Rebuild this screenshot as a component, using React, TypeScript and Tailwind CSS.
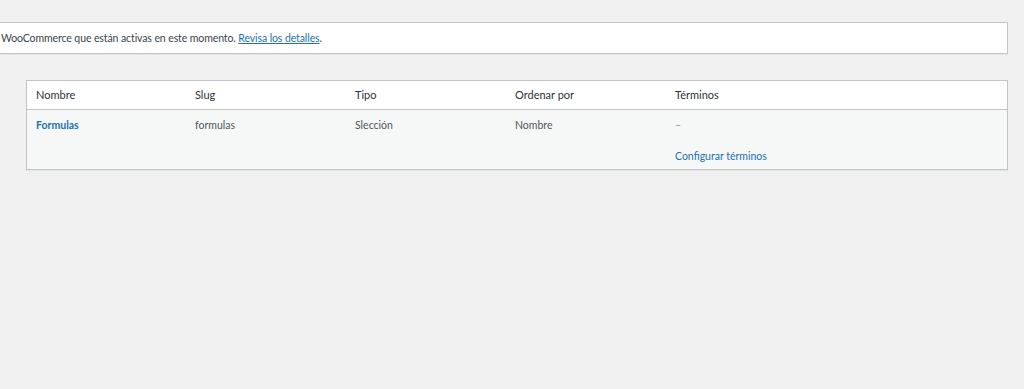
export default function App() {
  const font = { fontFamily: 'Lato, "Noto Sans", sans-serif' };

  return (
    <div className="min-h-[389px] w-[1024px] bg-[#f0f0f1] pt-[22px] text-[10.5px] text-[#3c434a]" style={font}>
      {/* Notice */}
      <div className="mr-[16px] flex h-[32px] items-center border-y border-r border-[#c3c4c7] bg-white pl-[1px] shadow-[0_1px_1px_rgba(0,0,0,0.04)]">
        <p className="whitespace-nowrap leading-[18px] tracking-[-0.1px]">
          WooCommerce que están activas en este momento.{' '}
          <a href="#" className="text-[#2271b1] underline">Revisa los detalles</a>.
        </p>
      </div>

      {/* Attributes table */}
      <div className="ml-[26px] mr-[16px] mt-[26px] border border-[#c3c4c7] bg-white shadow-[0_1px_1px_rgba(0,0,0,0.04)]">
        <div className="grid h-[29px] grid-cols-[160px_160px_160px_160px_1fr] items-center border-b border-[#c3c4c7] text-[11px] text-[#2c3338]">
          <div className="pl-[9px]">Nombre</div>
          <div className="pl-[8px]">Slug</div>
          <div className="pl-[8px]">Tipo</div>
          <div className="pl-[8px]">Ordenar por</div>
          <div className="pl-[8px]">Términos</div>
        </div>
        <div className="grid h-[59px] grid-cols-[160px_160px_160px_160px_1fr] bg-[#f6f7f7] pt-[6px] leading-[18px] text-[#50575e]">
          <div className="pl-[9px]">
            <a href="#" className="font-bold text-[#2271b1]">Formulas</a>
          </div>
          <div className="pl-[8px]">formulas</div>
          <div className="pl-[8px]">Slección</div>
          <div className="pl-[8px]">Nombre</div>
          <div className="flex flex-col pl-[8px]">
            <span className="text-[#8c8f94]">–</span>
            <a href="#" className="mt-[13px] text-[#2271b1]">Configurar términos</a>
          </div>
        </div>
      </div>
    </div>
  );
}
